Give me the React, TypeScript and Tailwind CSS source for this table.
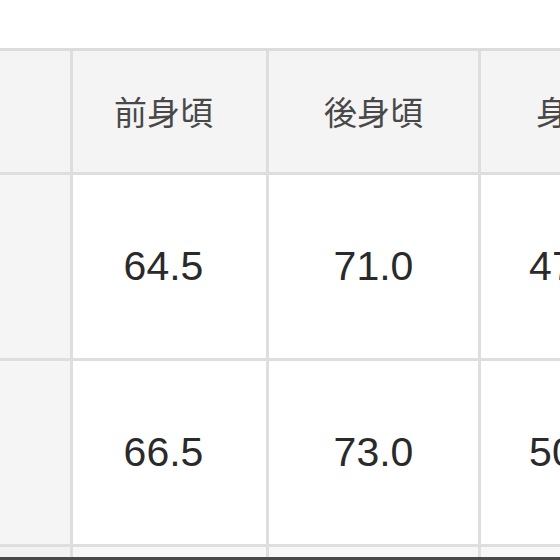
import React from 'react'

const headers = ['', '前身頃', '後身頃', '身幅']

const rows = [
  ['', '64.5', '71.0', '47.0'],
  ['', '66.5', '73.0', '50.0'],
]

// first data column sits a little left of its cell centre in the original
const shift = (c: number) => (c === 1 ? 'pr-[12px]' : '')

export default function App() {
  return (
    <div className="w-[560px] h-[560px] overflow-hidden bg-white" style={{ fontFamily: '"Liberation Sans", Arial, sans-serif' }}>
      {/* space above table */}
      <div className="h-[48px] bg-white" />

      {/* size table */}
      <div className="grid grid-cols-[70px_193px_209px_176px] grid-rows-[121px_183px_183px_10px] gap-[3px] bg-[#dedede] border-t-[3px] border-[#dcdcdc] w-[660px]">
        {headers.map((h, i) => (
          <div
            key={'h' + i}
            className={'flex items-center justify-center whitespace-nowrap bg-[#f4f4f4] text-[33px] text-[#484848] ' + shift(i)}
            style={{ fontFamily: '"Noto Sans CJK JP", "Noto Sans", sans-serif' }}
          >
            {h}
          </div>
        ))}

        {rows.map((row, r) =>
          row.map((cell, c) => (
            <div
              key={r + '-' + c}
              className={
                c === 0
                  ? 'flex items-center justify-center bg-[#f5f5f5]'
                  : 'flex items-center justify-center whitespace-nowrap bg-white text-[41px] text-[#2a2a2a] ' + shift(c)
              }
            >
              {cell}
            </div>
          ))
        )}

        {[0, 1, 2, 3].map(i => (
          <div key={'p' + i} className={i === 0 ? 'bg-[#f2f2f2]' : 'bg-[#f7f7f7]'} />
        ))}
      </div>

      {/* dark edge at bottom */}
      <div className="h-[3px] w-full bg-[#4a4a4a]" />
    </div>
  )
}
